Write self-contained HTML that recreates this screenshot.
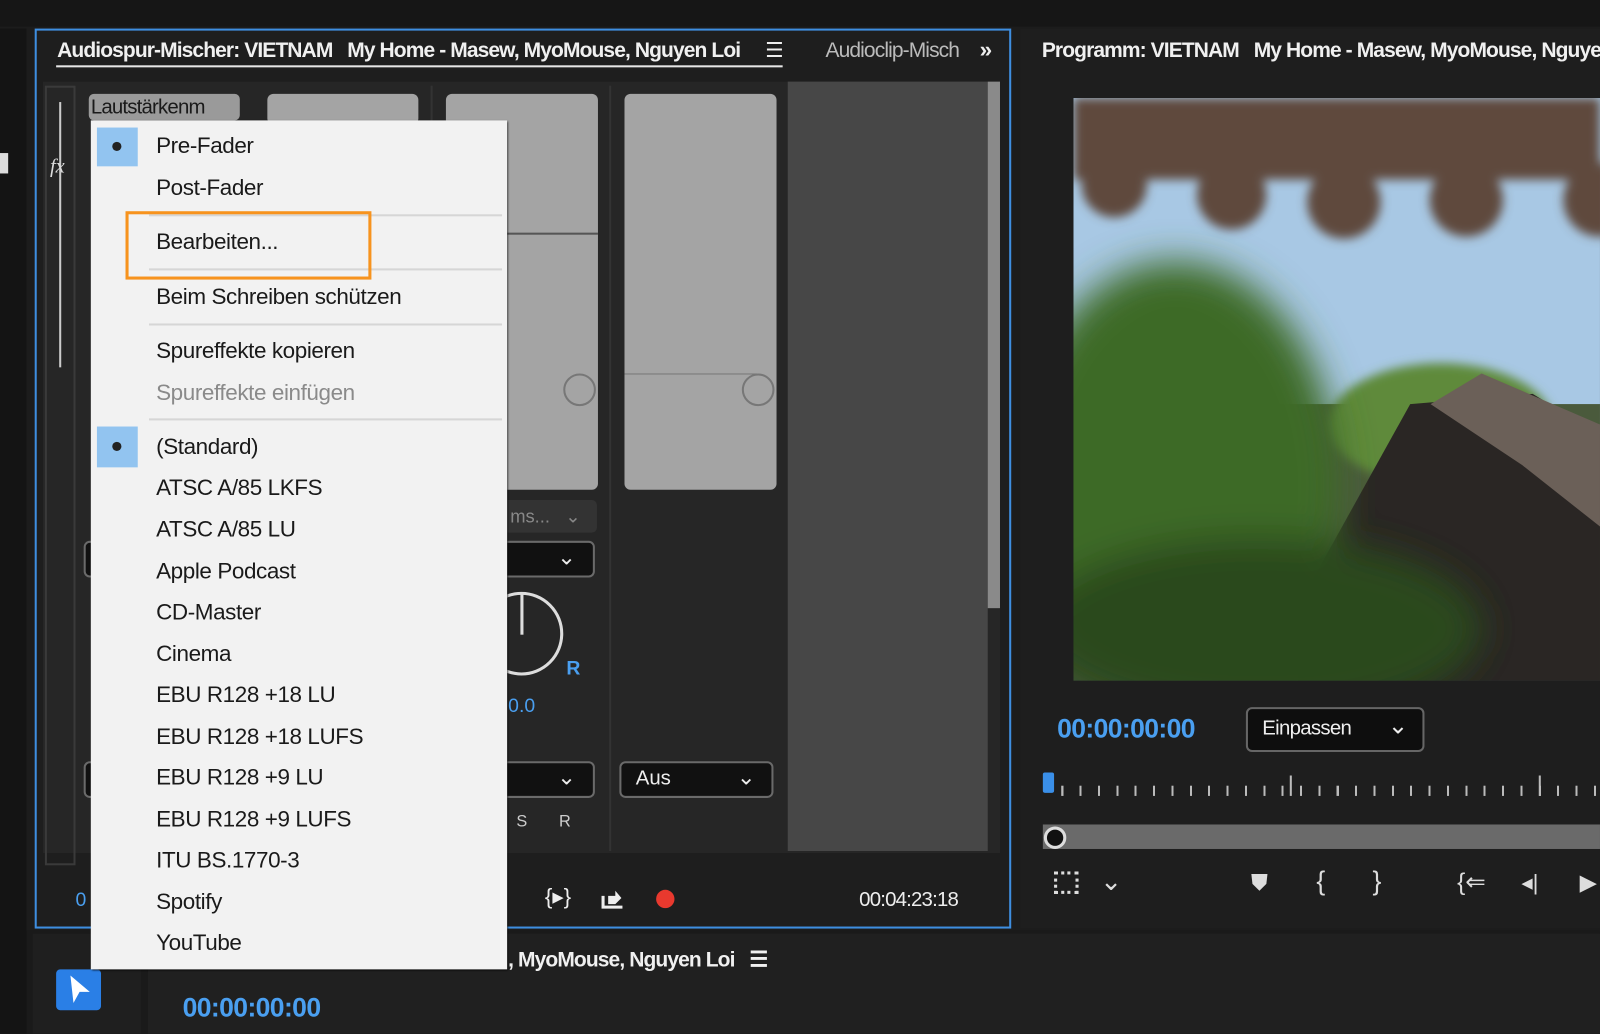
<!DOCTYPE html>
<html><head><meta charset="utf-8"><style>
*{margin:0;padding:0;box-sizing:border-box}
body{width:1600px;height:1033px;overflow:hidden;background:#1c1c1c;font-family:"Liberation Sans",sans-serif;position:relative;color:#eee}
#w{position:absolute;left:0;top:0;width:1568px;height:1013px;transform:scale(1.0204);transform-origin:0 0}
.a{position:absolute}
.t{position:absolute;white-space:nowrap}
.hd{font-size:21px;color:#f0f0f0;letter-spacing:-0.9px;font-weight:bold;transform:scaleX(0.98);transform-origin:0 0}
.mi{position:absolute;left:153px;font-size:22px;color:#1a1a1a;letter-spacing:-0.4px;white-space:nowrap}
.sep{position:absolute;left:146px;width:346px;height:2px;background:#d6d6d6}
.box{position:absolute;border:2px solid #6a6a6a;border-radius:6px;background:#111}
</style></head><body><div id="w">
<div class="a" style="left:0;top:0;width:1568px;height:26px;background:#161616"></div>
<div class="a" style="left:0;top:28px;width:26px;height:985px;background:#141414"></div>
<div class="a" style="left:0;top:150px;width:8px;height:20px;background:#ddd"></div>
<div class="a" style="left:34px;top:28px;width:957px;height:882px;border:2px solid #3e8ee0;background:#1e1e1e"></div>
<div class="t hd" style="left:56px;top:38px">Audiospur-Mischer: VIETNAM &nbsp;&nbsp;My Home - Masew, MyoMouse, Nguyen Loi</div>
<div class="t" style="left:750px;top:37px;font-size:20px">☰</div>
<div class="a" style="left:55px;top:64px;width:712px;height:2px;background:#e6e6e6"></div>
<div class="t hd" style="left:809px;top:38px;color:#bbb;font-weight:normal">Audioclip-Misch</div>
<div class="t" style="left:960px;top:36px;font-size:22px;font-weight:bold">»</div>
<div class="a" style="left:42px;top:80px;width:938px;height:756px;background:#262626"></div>
<div class="a" style="left:44px;top:84px;width:30px;height:764px;border:2px solid #3a3a3a"></div>
<div class="a" style="left:58px;top:100px;width:2px;height:260px;background:#ccc"></div>
<div class="t" style="left:49px;top:152px;font-style:italic;font-family:'Liberation Serif';font-size:20px;color:#ddd">fx</div>
<div class="a" style="left:772px;top:80px;width:196px;height:754px;background:#474747"></div>
<div class="a" style="left:968px;top:80px;width:12px;height:516px;background:#8a8a8a"></div>
<div class="a" style="left:422px;top:84px;width:2px;height:750px;background:#333"></div>
<div class="a" style="left:597px;top:84px;width:2px;height:750px;background:#333"></div>
<div class="a" style="left:87px;top:92px;width:148px;height:26px;background:#9a9a9a;border-radius:5px"></div>
<div class="t" style="left:89px;top:94px;font-size:20px;color:#1a1a1a;letter-spacing:-0.8px">Lautstärkenm</div>
<div class="a" style="left:262px;top:92px;width:148px;height:30px;background:#a4a4a4;border-radius:6px"></div>
<div class="a" style="left:437px;top:92px;width:149px;height:388px;background:#a4a4a4;border-radius:6px"></div>
<div class="a" style="left:437px;top:228px;width:149px;height:2px;background:#555"></div>
<div class="a" style="left:612px;top:92px;width:149px;height:388px;background:#a4a4a4;border-radius:6px"></div>
<div class="a" style="left:612px;top:366px;width:130px;height:1px;background:#777"></div>
<div class="a" style="left:727px;top:366px;width:32px;height:32px;border:2px solid #777;border-radius:50%"></div>
<div class="a" style="left:552px;top:366px;width:32px;height:32px;border:2px solid #777;border-radius:50%"></div>
<div class="a" style="left:437px;top:490px;width:148px;height:32px;background:#333;border-radius:5px"></div>
<div class="t" style="left:500px;top:496px;font-size:18px;color:#888">ms...&nbsp;&nbsp; ⌄</div>
<div class="box" style="left:437px;top:530px;width:146px;height:36px"></div>
<div class="t" style="left:546px;top:533px;font-size:22px;color:#eee">⌄</div>
<div class="a" style="left:470px;top:580px;width:82px;height:82px;border:3px solid #ddd;border-radius:50%"></div>
<div class="a" style="left:510px;top:582px;width:3px;height:40px;background:#ddd"></div>
<div class="t" style="left:555px;top:645px;font-size:19px;color:#4a9ff0;font-weight:bold">R</div>
<div class="t" style="left:498px;top:682px;font-size:19px;color:#4a9ff0">0.0</div>
<div class="box" style="left:437px;top:746px;width:146px;height:36px"></div>
<div class="t" style="left:546px;top:749px;font-size:22px">⌄</div>
<div class="box" style="left:607px;top:746px;width:151px;height:36px"></div>
<div class="t" style="left:623px;top:752px;font-size:20px">Aus</div>
<div class="t" style="left:722px;top:749px;font-size:22px">⌄</div>
<div class="t" style="left:506px;top:797px;font-size:16px;color:#ccc">S &nbsp;&nbsp;&nbsp;&nbsp;&nbsp; R</div>
<div class="box" style="left:82px;top:530px;width:20px;height:36px"></div>
<div class="box" style="left:82px;top:746px;width:20px;height:36px"></div>
<div class="t" style="left:74px;top:872px;font-size:19px;color:#4a9ff0">0</div>
<div class="t" style="left:534px;top:866px;font-size:22px;color:#eee">{▸}</div>
<svg class="a" style="left:588px;top:868px" width="26" height="24"><path d="M3 10v11h19" fill="none" stroke="#eee" stroke-width="3"/><path d="M8 18V10h7V5l6 7-6 6" fill="#eee"/></svg>
<div class="a" style="left:643px;top:872px;width:18px;height:18px;border-radius:50%;background:#e8392e"></div>
<div class="t" style="left:842px;top:871px;font-size:20px;color:#eee;letter-spacing:-0.8px">00:04:23:18</div>
<div class="a" style="left:1000px;top:28px;width:568px;height:882px;background:#1e1e1e"></div>
<div class="t hd" style="left:1021px;top:38px">Programm: VIETNAM &nbsp;&nbsp;My Home - Masew, MyoMouse, Nguyen Loi</div>
<svg class="a" style="left:1052px;top:96px" width="516" height="571" viewBox="0 0 516 571">
<defs><filter id="b"><feGaussianBlur stdDeviation="18"/></filter><filter id="b2"><feGaussianBlur stdDeviation="5"/></filter></defs>
<rect width="516" height="571" fill="#a8c8e4"/>
<rect y="300" width="516" height="271" fill="#4a5a3c"/>
<g filter="url(#b2)"><rect width="516" height="80" fill="#5e4a3e"/>
<circle cx="40" cy="85" r="32" fill="#5e4a3e"/><circle cx="155" cy="95" r="34" fill="#5e4a3e"/><circle cx="265" cy="102" r="36" fill="#5e4a3e"/><circle cx="385" cy="100" r="36" fill="#5e4a3e"/><circle cx="516" cy="100" r="36" fill="#5e4a3e"/>
<ellipse cx="360" cy="320" rx="110" ry="60" fill="#5f8a3a"/></g>
<polygon points="230,480 330,300 450,290 516,330 516,571 220,571" fill="#2a2624"/>
<polygon points="350,300 400,270 516,320 516,420 440,360" fill="#6b6058"/>
<g filter="url(#b)"><ellipse cx="100" cy="380" rx="160" ry="220" fill="#3d6a28"/><ellipse cx="180" cy="520" rx="220" ry="90" fill="#2c4a1e"/></g>
</svg>
<div class="t" style="left:1036px;top:699px;font-size:26px;color:#4a9ff0;letter-spacing:-0.6px;font-weight:bold">00:00:00:00</div>
<div class="a" style="left:1221px;top:693px;width:175px;height:44px;border:2px solid #666;border-radius:6px;background:#0e0e0e"></div>
<div class="t" style="left:1237px;top:703px;font-size:20px;color:#eee;letter-spacing:-0.7px">Einpassen</div>
<div class="t" style="left:1360px;top:697px;font-size:24px;color:#eee">⌄</div>
<div class="a" style="left:1022px;top:757px;width:11px;height:20px;background:#3a8fe8;border-radius:2px"></div>
<div class="a" style="left:1040px;top:770px;width:528px;height:10px;background:repeating-linear-gradient(90deg,#bbb 0 2px,transparent 2px 18px)"></div>
<div class="a" style="left:1264px;top:760px;width:2px;height:20px;background:#bbb"></div>
<div class="a" style="left:1508px;top:760px;width:2px;height:20px;background:#bbb"></div>
<div class="a" style="left:1022px;top:808px;width:546px;height:24px;background:#6a6a6a"></div>
<div class="a" style="left:1023px;top:810px;width:22px;height:22px;border:3px solid #ddd;border-radius:50%;background:#111"></div>
<div class="a" style="left:1033px;top:854px;width:24px;height:22px;border:3px dotted #ddd"></div>
<div class="t" style="left:1078px;top:848px;font-size:26px;color:#ddd">⌄</div>
<div class="t" style="left:1226px;top:852px;font-size:22px;color:#ddd">⛊</div>
<div class="t" style="left:1290px;top:848px;font-size:26px;color:#ddd">{</div>
<div class="t" style="left:1345px;top:848px;font-size:26px;color:#ddd">}</div>
<div class="t" style="left:1428px;top:850px;font-size:24px;color:#ddd">{⇐</div>
<div class="t" style="left:1491px;top:852px;font-size:22px;color:#ddd">◂|</div>
<div class="t" style="left:1548px;top:852px;font-size:22px;color:#ddd">▶</div>
<div class="a" style="left:26px;top:912px;width:1542px;height:101px;background:#1a1a1a"></div>
<div class="a" style="left:32px;top:915px;width:106px;height:98px;background:#1f1f1f"></div>
<div class="a" style="left:145px;top:915px;width:1423px;height:98px;background:#202020"></div>
<div class="a" style="left:55px;top:950px;width:44px;height:40px;background:#2a7fe6;border-radius:4px"></div>
<svg class="a" style="left:66px;top:954px" width="24" height="32"><polygon points="3,2 22,18 12,18 6,29" fill="#fff"/></svg>
<div class="t hd" style="left:498px;top:928px">, MyoMouse, Nguyen Loi &nbsp;&nbsp;☰</div>
<div class="t" style="left:179px;top:972px;font-size:26px;color:#4a9ff0;letter-spacing:-0.6px;font-weight:bold">00:00:00:00</div>
<div class="a" style="left:89px;top:118px;width:408px;height:832px;background:#f2f2f2;box-shadow:1px 1px 2px #000"></div>
<div class="a" style="left:95px;top:125px;width:40px;height:38px;background:#92c4f0"></div>
<div class="a" style="left:95px;top:418px;width:40px;height:40px;background:#92c4f0"></div>
<div class="a" style="left:110px;top:139px;width:9px;height:9px;border-radius:50%;background:#222"></div>
<div class="a" style="left:110px;top:433px;width:9px;height:9px;border-radius:50%;background:#222"></div>
<div class="mi" style="top:130px">Pre-Fader</div>
<div class="mi" style="top:171px">Post-Fader</div>
<div class="sep" style="top:210px"></div>
<div class="mi" style="top:224px">Bearbeiten...</div>
<div class="sep" style="top:263px"></div>
<div class="mi" style="top:278px">Beim Schreiben schützen</div>
<div class="sep" style="top:317px"></div>
<div class="mi" style="top:331px">Spureffekte kopieren</div>
<div class="mi" style="top:372px;color:#8a8a8a">Spureffekte einfügen</div>
<div class="sep" style="top:410px"></div>
<div class="mi" style="top:425px">(Standard)</div>
<div class="mi" style="top:465px">ATSC A/85 LKFS</div>
<div class="mi" style="top:506px">ATSC A/85 LU</div>
<div class="mi" style="top:547px">Apple Podcast</div>
<div class="mi" style="top:587px">CD-Master</div>
<div class="mi" style="top:628px">Cinema</div>
<div class="mi" style="top:668px">EBU R128 +18 LU</div>
<div class="mi" style="top:709px">EBU R128 +18 LUFS</div>
<div class="mi" style="top:749px">EBU R128 +9 LU</div>
<div class="mi" style="top:790px">EBU R128 +9 LUFS</div>
<div class="mi" style="top:830px">ITU BS.1770-3</div>
<div class="mi" style="top:871px">Spotify</div>
<div class="mi" style="top:911px">YouTube</div>
<div class="a" style="left:123px;top:207px;width:241px;height:67px;border:3px solid #f7931e"></div>
</div></body></html>
